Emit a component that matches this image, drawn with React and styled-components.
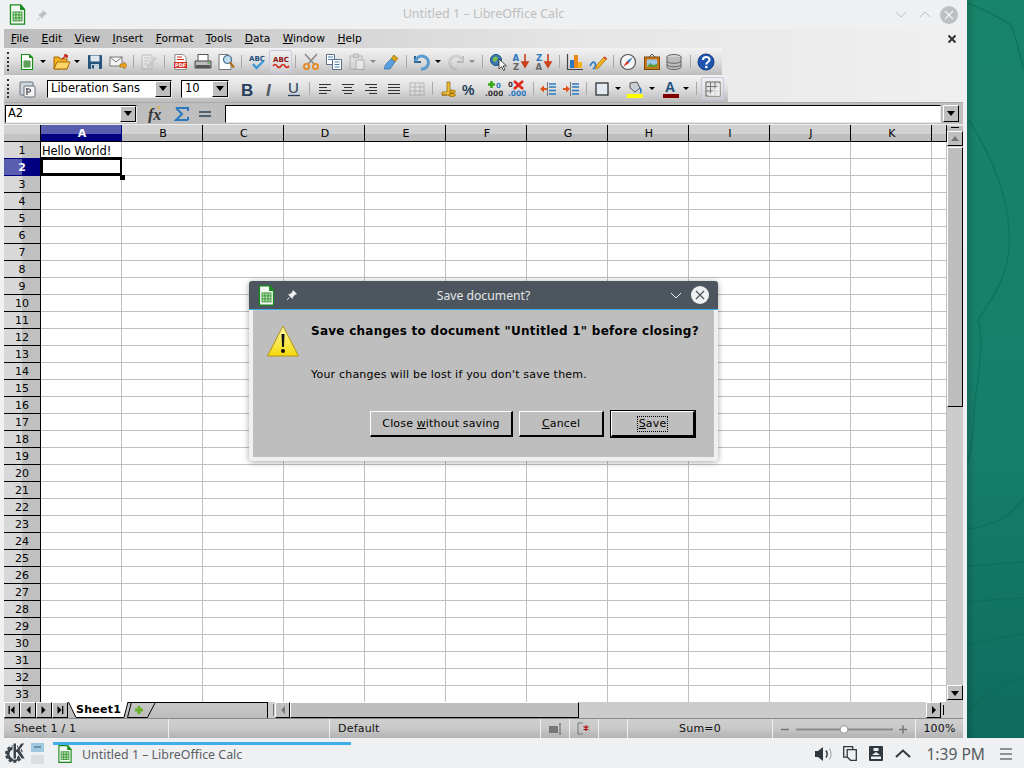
import React from 'react';
import styled, { createGlobalStyle } from 'styled-components';

const Global = createGlobalStyle`
  html, body { margin: 0; padding: 0; background: #eff0f1; }
  * { box-sizing: border-box; }
  body { font-family: "DejaVu Sans", sans-serif; }
`;

const Screen = styled.div`
  width: 1024px; height: 768px; overflow: hidden; display: flex; flex-direction: column;
  font-family: "DejaVu Sans", sans-serif; font-size: 11px; color: #000; position: relative;
`;
const Desktop = styled.div`display: flex; height: 738px;`;
const Wallpaper = styled.svg`flex: 1; height: 738px; display: block;`;
const AppWindow = styled.div`width: 967px; height: 738px; background: #eff0f1; display: flex; flex-direction: column;`;
const TitleBar = styled.div`height: 29px; display: flex; align-items: center; position: relative; padding-left: 6px; flex: none;`;
const TitleText = styled.div`
  position: absolute; left: 0; right: 0; top: 5px; text-align: center;
  font-family: "Noto Sans", sans-serif; font-size: 12.5px; color: #bcbfc2;
`;
const TitleTools = styled.div`display: flex; align-items: center; justify-content: space-between; width: 42px;`;
const TitleButtons = styled.div`margin-left: auto; display: flex; align-items: center; gap: 9px; padding-right: 9px;`;
const ChevGroup = styled.div`display: flex; align-items: center; gap: 12px;`;
const Frame = styled.div`flex: 1; min-height: 0; padding: 0 4px; display: flex; flex-direction: column;`;
const MenuBar = styled.div`
  height: 19px; flex: none; display: flex; align-items: center; position: relative; padding-left: 7px; gap: 12.5px;
  background: linear-gradient(to right, #bdbdbd, #e6e6e6 60%, #f0f0f0);
`;
const MenuItem = styled.span`font-size: 10.7px; u { text-decoration: underline; }`;
const MenuClose = styled.svg`position: absolute; right: 6px; top: 5px;`;
const ToolArea = styled.div`
  height: 54px; flex: none; display: flex; flex-direction: column;
  background: linear-gradient(to right, #bdbdbd, #e6e6e6 60%, #f0f0f0);
`;
const Toolbar = styled.div`
  height: 27px; width: ${p => p.$w}px; display: flex; align-items: center; flex: none; padding-left: 3px;
  background: linear-gradient(to bottom, #f2f2f2, #dedede 50%, #bcbcbc);
`;
const Grip = styled.div`width: 2px; height: 19px; border-left: 2px dotted #333; flex: none;`;
const Slot = styled.div`width: ${p => p.$w}px; flex: none; display: flex; align-items: center; height: 100%;`;
const SlotIcon = styled.svg`display: block; flex: none; margin-left: ${p => p.$ml || 0}px;`;
const Sep = styled.div`width: 1px; height: 13px; background: #a8a8a8; flex: none;`;
const Arrow = styled.div`
  width: 0; height: 0; border-left: 3px solid transparent; border-right: 3px solid transparent;
  border-top: 3px solid ${p => (p.$off ? '#8a8a8a' : '#000')}; flex: none;
`;
const Hover = styled.div`
  width: 23px; height: 23px; flex: none; border: 1px solid #c8c8e4; border-radius: 2px; margin-left: -2px;
  background: rgba(255,255,255,.15); display: flex; align-items: center; justify-content: center;
`;
const Combo = styled.div`
  height: 18px; width: ${p => p.$w}px; flex: none; display: flex; background: #fff; align-items: stretch;
  border-top: 1px solid #000; border-left: 1px solid #000; border-right: 1px solid #eee; border-bottom: 1px solid #eee;
  font-size: 11.5px;
`;
const ComboText = styled.div`flex: 1; padding-left: ${p => p.$pad || 3}px; line-height: 15px; overflow: hidden; white-space: nowrap;`;
const ComboBtn = styled.div`
  width: 16px; background: #bebebe; border-top: 1px solid #fff; border-left: 1px solid #fff;
  border-right: 1px solid #000; border-bottom: 1px solid #000; display: flex; align-items: center; justify-content: center;
`;
const DownTri = styled.div`width: 0; height: 0; border-left: 4px solid transparent; border-right: 4px solid transparent; border-top: 5px solid #000;`;
const FormulaBar = styled.div`
  height: 23px; flex: none; background: #bebebe; display: flex; align-items: center; padding-left: 1px;
  border-top: 1px solid #aaa; border-bottom: 1px solid #eee;
`;
const FxGroup = styled.div`display: flex; align-items: center; gap: 5px; margin-left: 11px; width: 77px;`;
const InputLine = styled.div`
  width: 716px; height: 18px; background: #fff; border-top: 1px solid #000; border-left: 1px solid #000;
  border-right: 1px solid #e6e6e6; border-bottom: 1px solid #e6e6e6; flex: none;
`;
const LineBtn = styled(ComboBtn)`width: 16px; height: 17px; margin-left: 2px; flex: none;`;
const SheetArea = styled.div`flex: 1; min-height: 0; display: flex;`;
const Sheet = styled.div`width: 943px; overflow: hidden; display: grid; grid-template-columns: 37px repeat(11, 81px) 15px; grid-auto-rows: 17px; background: #fff; align-content: start;`;
const Corner = styled.div`background: linear-gradient(to bottom, #d2d2d2 55%, #c4c4c4 55%); border-bottom: 1px solid #000; border-right: 1px solid #000;`;
const ColHead = styled.div`
  text-align: center; line-height: 15px; font-size: 11px; letter-spacing: .2px; padding: 1px 0 0 2px;
  border-right: 1px solid ${p => (p.$sel ? '#000080' : '#000')}; border-bottom: 1px solid #000;
  background: ${p => (p.$sel
    ? 'linear-gradient(to bottom, #5a5eb0 55%, #000080 55%)'
    : 'linear-gradient(to bottom, #d2d2d2 55%, #bebebe 55%)')};
  color: ${p => (p.$sel ? '#fff' : '#000')}; font-weight: ${p => (p.$sel ? 700 : 400)};
`;
const RowHead = styled.div`
  text-align: center; line-height: 17px; font-size: 11px; border-right: 1px solid #000;
  background: ${p => (p.$sel
    ? 'linear-gradient(to right, #5a5eb0 50%, #000080 50%)'
    : 'linear-gradient(to right, #d8d8d8 50%, #c0c0c0 50%)')};
  color: ${p => (p.$sel ? '#fff' : '#000')}; font-weight: ${p => (p.$sel ? 700 : 400)};
  border-bottom: 1px solid ${p => p.$line};
`;
const Cell = styled.div`
  border-right: 1px solid #c0c0c0; border-bottom: 1px solid #c0c0c0; font-size: 11.5px; line-height: 18px; padding-left: 1px;
  white-space: nowrap; position: relative; letter-spacing: -.1px;
`;
const Cursor = styled.div`
  position: absolute; z-index: 1; left: 0; top: -2px; right: -1px; bottom: -1px; border-style: solid; border-color: #000; border-width: 3px 2px;
  &::after { content: ''; position: absolute; right: -5px; bottom: -7px; width: 5px; height: 5px; background: #000; }
`;
const VScroll = styled.div`width: 16px; flex: none; background: #ccc; display: flex; flex-direction: column;`;
const VSplit = styled.div`height: 6px; background: #bebebe; border-top: 1px solid #ddd; display: flex; justify-content: center; padding-top: 1px;`;
const RaisedBtn = styled.div`
  background: #bebebe; border-top: 1px solid #fff; border-left: 1px solid #fff; border-right: 1px solid #000; border-bottom: 1px solid #000;
  display: flex; align-items: center; justify-content: center; flex: none;
  width: ${p => (p.$w ? `${p.$w}px` : 'auto')}; height: ${p => (p.$h ? `${p.$h}px` : 'auto')};
  margin-top: ${p => p.$mt || 0}px;
`;
const VSpace = styled.div`flex: 1;`;
const VFoot = styled.div`height: 2px; flex: none;`;
const TabBar = styled.div`height: 16px; flex: none; background: #ccc; display: flex; align-items: stretch;`;
const TabStrip = styled.div`
  width: 200px; flex: none; position: relative; background: linear-gradient(to bottom, #c8c8c8, #bcbcbc);
  border-right: 1px solid #000; border-top: 1px solid #000;
`;
const TabShape = styled.svg`position: absolute; left: 0; top: -1px; display: block;`;
const SheetTab = styled.div`
  position: absolute; left: 8px; top: -1px; width: 44px; height: 16px; font-weight: 700; font-size: 11px; letter-spacing: .25px; line-height: 15px; text-align: center;
`;
const HSplit = styled.div`
  width: 7px; flex: none; display: flex; justify-content: flex-end; padding: 2px 1px 2px 0;
`;
const SplitBar = styled.div`width: 1px; background: #777;`;
const HThumb = styled(RaisedBtn)`width: 289px; height: 16px;`;
const HEnd = styled.div`width: 22px; flex: none; padding: 3px 0 3px 2px; display: flex;`;
const EndBar = styled.div`width: 1px; background: #000;`;
const StatusBar = styled.div`
  height: 20px; flex: none; display: flex; align-items: center;
  background: linear-gradient(to bottom, #cfcfcf, #c8c8c8 50%, #b2b2b2); border-top: 1px solid #8a8a8a;
`;
const StatusCell = styled.div`
  width: ${p => p.$w}px; height: 19px; flex: none; display: flex; align-items: center; justify-content: ${p => p.$j || 'flex-start'};
  padding-left: ${p => p.$pad || 0}px; font-size: 11px; letter-spacing: .2px; color: #111;
  border-right: ${p => (p.$last ? 0 : '1px solid #eee')};
`;
const Panel = styled.div`height: 30px; flex: none; background: #eff0f1; display: flex; align-items: center; position: relative;`;
const Pager = styled.div`display: flex; flex-direction: column; gap: 3px; margin-left: 6px; width: 13px;`;
const PagerCell = styled.div`height: 9px; background: ${p => (p.$on ? '#9cc8e0' : '#dcdddf')}; display: flex; align-items: center; justify-content: center;`;
const PagerDash = styled.div`width: 7px; height: 2px; background: #6d8fa5;`;
const Task = styled.div`
  margin-left: 9px; width: 298px; height: 30px; position: relative; display: flex; align-items: center; padding: 2px 0 0 2px; gap: 7px;
  font-family: "Noto Sans", sans-serif; font-size: 12.4px; color: #5b6166;
  &::before { content: ''; position: absolute; left: 0; right: 0; top: 4px; height: 3px; background: #3daee9; }
`;
const Tray = styled.div`margin-left: auto; display: flex; align-items: center; padding: 1px 12px 0 0; color: #444c53;`;
const Clock = styled.div`font-family: "Noto Sans", sans-serif; font-size: 15.6px; color: #555c62; margin-left: 15px; padding-top: 1px; white-space: nowrap;`;
const Dialog = styled.div`
  position: absolute; left: 249px; top: 281px; width: 469px; height: 180px; background: #eff0f1; border-radius: 3px;
  box-shadow: 0 1px 6px rgba(0,0,0,.35); display: flex; flex-direction: column;
`;
const DialogTitle = styled.div`
  height: 29px; flex: none; background: #4d565e; border-bottom: 1px solid #3daee9; border-radius: 3px 3px 0 0;
  display: flex; align-items: center; position: relative; padding-left: 6px; gap: 8px;
`;
const DialogTitleText = styled.div`
  position: absolute; left: 0; right: 0; top: 6px; text-align: center; font-family: "Noto Sans", sans-serif; font-size: 12.2px; color: #e4e6e8;
`;
const DialogCtl = styled.div`margin-left: auto; display: flex; align-items: center; gap: 9px; padding-right: 9px;`;
const DialogBody = styled.div`
  flex: 1; margin: 0 4px 4px; background: #bebebe; display: flex; flex-direction: column; padding: 12px 19px 0 14px;
`;
const MsgRow = styled.div`display: flex; gap: 12px; height: 89px;`;
const MsgCol = styled.div`display: flex; flex-direction: column;`;
const WarnIcon = styled.svg`display: block; flex: none; margin-top: 3px;`;
const Heading = styled.div`font-weight: 700; font-size: 12px; letter-spacing: .26px; line-height: 16px; white-space: nowrap; margin-top: 1px;`;
const Sub = styled.div`font-size: 11px; letter-spacing: .2px; line-height: 14px; margin-top: 29px; white-space: nowrap;`;
const BtnRow = styled.div`display: flex; justify-content: flex-end; gap: 6px; align-items: center;`;
const DlgButton = styled.div`
  width: ${p => p.$w}px; height: 26px; background: #bebebe; display: flex; align-items: center; justify-content: center;
  border-top: 1px solid #fff; border-left: 1px solid #fff; border-right: 2px solid #000; border-bottom: 2px solid #000;
  outline: ${p => (p.$def ? '1px solid #000' : 'none')}; margin-left: ${p => (p.$def ? 1 : 0)}px;
  font-size: 11px; letter-spacing: .15px; u { text-decoration: underline; }
`;
const Focus = styled.span`border: 1px dotted #000; padding: 1px 1px; line-height: 12px; u { text-decoration: underline; }`;

const Cal = ({ size = 18 }) => (
  <SlotIcon width={size} height={size} viewBox="0 0 18 18">
    <path d="M3.500 1.500h8l3 3.500v11.500h-11z" fill="#f4f8f2" stroke="#168a1c" />
    <path d="M11 1l4 4.500h-4z" fill="#168a1c" />
    <rect x="5.500" y="7" width="7" height="7" fill="#bfe3b6" stroke="#2f8f2f" strokeWidth=".7" />
    <path d="M5.500 9.300h7M5.500 11.700h7M7.800 7v7M10.200 7v7" stroke="#2f8f2f" strokeWidth=".7" />
  </SlotIcon>
);

const glyphs = {
  new: <g><path d="M3.500 1.500h8l3 3v12h-11z" fill="#fff" stroke="#1a8f1a" strokeWidth="1.200" /><path d="M11 1l4 4h-4z" fill="#1a8f1a" /><path d="M6 8h6v6H6zM6 10h6M6 12h6M8 8v6M10 8v6" fill="#cfe9c5" stroke="#1a7a1a" strokeWidth=".8" /></g>,
  open: <g><path d="M1 4h5l1 2h7v10H1z" fill="#f5b324" stroke="#a86a00" /><path d="M1 16l3-7h13l-3 7z" fill="#fbd568" stroke="#a86a00" /><path d="M9 6l5-4m0 0h-3m3 0v3" stroke="#c8281e" strokeWidth="1.600" fill="none" /></g>,
  save: <g><rect x="2" y="2" width="14" height="14" rx="1" fill="#23527c" /><rect x="4.500" y="2.500" width="9" height="6" fill="#dfe7ee" /><rect x="5" y="11" width="8" height="5" fill="#c4d0da" /><rect x="6" y="12" width="2" height="3.500" fill="#23527c" /></g>,
  mail: <g><rect x="1" y="4" width="12" height="9" fill="#f3f3f3" stroke="#7a7a7a" /><path d="M1 4l6 5 6-5" fill="none" stroke="#7a7a7a" /><path d="M11 11h4V9l3 3.500L15 16v-2h-4z" fill="#f5a623" stroke="#a86a00" strokeWidth=".7" /></g>,
  edit: <g opacity=".4"><path d="M3 2h10v14H3z" fill="#eee" stroke="#888" /><path d="M5 5h6M5 8h6M5 11h3" stroke="#999" /><path d="M8 13l8-9 1.500 1.500-8 9z" fill="#bbb" stroke="#888" strokeWidth=".6" /></g>,
  pdf: <g><path d="M3 1.500h8l3 3v12H3z" fill="#fff" stroke="#888" /><rect x="2" y="9" width="13" height="6" fill="#d5281e" /><text x="3" y="14" fontSize="5" fontWeight="700" fill="#fff" fontFamily="DejaVu Sans">PDF</text><path d="M5 4h5M5 6.500h7" stroke="#d5281e" strokeWidth="1.200" /></g>,
  print: <g><rect x="4" y="1.500" width="10" height="7" fill="#fff" stroke="#555" /><path d="M1 8h16v7H1z" fill="#bcbcbc" stroke="#444" /><rect x="2" y="12" width="14" height="3" fill="#555" /><circle cx="14.500" cy="10" r="1" fill="#4caf50" /></g>,
  preview: <g><path d="M2 1.500h9l3 3v12H2z" fill="#fff" stroke="#777" /><circle cx="10.500" cy="6.500" r="4" fill="#bcdcf0" stroke="#4a6f8a" strokeWidth="1.200" /><path d="M13 9.500l4 5" stroke="#b06a1c" strokeWidth="2.200" /></g>,
  spell: <g><text x="1" y="7.500" fontSize="7" fontWeight="700" fill="#1f4f80" fontFamily="DejaVu Sans">ABC</text><path d="M5 11l3.500 4 7-7" fill="none" stroke="#3a97d8" strokeWidth="2.300" /></g>,
  auto: <g><text x="1" y="9" fontSize="7" fontWeight="700" fill="#8a1010" fontFamily="DejaVu Sans">ABC</text><path d="M1 13q2-3 4 0t4 0 4 0 4 0" fill="none" stroke="#d62a1c" strokeWidth="1.700" /></g>,
  cut: <g><path d="M3 1l9 10M15 1L6 11" stroke="#8a8a8a" strokeWidth="1.600" /><circle cx="4.500" cy="13.500" r="2.600" fill="none" stroke="#e8871a" strokeWidth="1.800" /><circle cx="13.500" cy="13.500" r="2.600" fill="none" stroke="#e8871a" strokeWidth="1.800" /></g>,
  copy: <g><path d="M1.500 1.500h8v10h-8z" fill="#fff" stroke="#58708a" /><path d="M3 4h5M3 6.500h5" stroke="#4a7fb0" /><path d="M7.500 6.500h9v10h-9z" fill="#fff" stroke="#58708a" /><path d="M9.500 9h5M9.500 11.500h5M9.500 14h5" stroke="#4a7fb0" /></g>,
  paste: <g opacity=".42"><rect x="2" y="3" width="12" height="13" fill="#ddd" stroke="#777" /><rect x="5.500" y="1" width="5" height="3.500" fill="#bbb" stroke="#777" /><path d="M8 7h8v9.500H8z" fill="#fff" stroke="#777" /></g>,
  brush: <g><path d="M12 2l4 3.500-3 3.500-4-3.500z" fill="#d8a31c" stroke="#8a6500" strokeWidth=".6" /><path d="M9 6l4 3-5 7H2l2-5z" fill="#5aa0e0" stroke="#2a6aa8" strokeWidth=".7" /></g>,
  undo: <g><path d="M3 3v6h6" fill="none" stroke="#2a5f8e" strokeWidth="2" /><path d="M3.500 8.500A6.500 6.500 0 1 1 9 16" fill="none" stroke="#5a9bd0" strokeWidth="3" /></g>,
  redo: <g opacity=".38"><path d="M15 3v6H9" fill="none" stroke="#777" strokeWidth="2" /><path d="M14.500 8.500A6.500 6.500 0 1 0 9 16" fill="none" stroke="#aaa" strokeWidth="3" /></g>,
  find: <g><circle cx="7" cy="7" r="5.500" fill="#3b7ab5" stroke="#1c4f80" /><path d="M4 5q3-3 5 0l-2 4-3-1z" fill="#7ac043" /><path d="M10 6v10l2.500-2.500 2 4 1.500-.8-2-3.800h3.500z" fill="#fff" stroke="#222" strokeWidth=".8" /></g>,
  sortA: <g><text x="0.500" y="7.500" fontSize="8.500" fontWeight="700" fill="#2a78c0" fontFamily="DejaVu Sans">A</text><text x="1" y="17" fontSize="8.500" fontWeight="700" fill="#666" fontFamily="DejaVu Sans">Z</text><path d="M13 1v11m-3-3l3 5 3-5z" fill="#e04a1c" stroke="#c8401a" strokeWidth="1.600" /></g>,
  sortZ: <g><text x="1" y="7.500" fontSize="8.500" fontWeight="700" fill="#2a78c0" fontFamily="DejaVu Sans">Z</text><text x="0.500" y="17" fontSize="8.500" fontWeight="700" fill="#666" fontFamily="DejaVu Sans">A</text><path d="M13 1v11m-3-3l3 5 3-5z" fill="#e04a1c" stroke="#c8401a" strokeWidth="1.600" /></g>,
  chart: <g><path d="M1.500 1v15.500H17" fill="none" stroke="#444" strokeWidth="1.200" /><rect x="4" y="7" width="4" height="8" fill="#2a78c0" /><rect x="8" y="2" width="4" height="13" fill="#e8871a" /><rect x="12" y="9" width="4" height="6" fill="#f2b21e" /></g>,
  draw: <g><path d="M1 13q3-6 5-3t-2 6" fill="none" stroke="#2a78c0" strokeWidth="1.600" /><path d="M7 13l8-9 2.500 2-8 9-3 1z" fill="#f2b21e" stroke="#a86a00" strokeWidth=".7" /><path d="M15 4l2.500 2" stroke="#d5281e" strokeWidth="1.600" /></g>,
  nav: <g><circle cx="9" cy="9" r="7.500" fill="#f5f5f5" stroke="#555" strokeWidth="1.200" /><path d="M14 4L8 8l2 2z" fill="#2a78c0" /><path d="M4 14l4-6 2 2z" fill="#d5281e" /></g>,
  gallery: <g><rect x="1.500" y="4" width="15" height="12.500" fill="#c8781a" stroke="#7a4a08" /><rect x="4" y="6.500" width="10" height="7.500" fill="#9cc8e8" /><path d="M4 14l3-4 3 2 4-1v3z" fill="#5a9e3a" /><path d="M6 4l3-3 3 3" fill="none" stroke="#555" /></g>,
  db: <g><ellipse cx="9" cy="4" rx="7" ry="2.500" fill="#d4d4d4" stroke="#666" /><path d="M2 4v10c0 3.300 14 3.300 14 0V4" fill="#bdbdbd" stroke="#666" /><path d="M2 8c0 3 14 3 14 0M2 11.500c0 3 14 3 14 0" fill="none" stroke="#666" /></g>,
  help: <g><circle cx="9" cy="9" r="8" fill="#1f55b0" stroke="#123a80" /><path d="M6 7c0-4 6.500-4 6.500-.3 0 2.300-3.200 2.300-3.200 4.800" fill="none" stroke="#fff" strokeWidth="2.100" /><circle cx="9.300" cy="14" r="1.300" fill="#fff" /></g>,
  styles: <g><rect x="2" y="2" width="13" height="13" rx="1" fill="#cfd6dc" stroke="#67727c" /><rect x="6" y="6" width="11" height="11" rx="1" fill="#f3f3f3" stroke="#67727c" /><path d="M9 8v7M8 9h3q1.500 0 1.500 1.400T11 12H9" fill="none" stroke="#445" strokeWidth="1.200" /></g>,
  bold: <text x="2" y="15.500" fontSize="17" fontWeight="700" fill="#23405c" fontFamily="Liberation Sans">B</text>,
  italic: <text x="4" y="15.500" fontSize="17" fontStyle="italic" fontWeight="700" fill="#4f5a64" fontFamily="Liberation Sans">I</text>,
  under: <g><text x="3" y="13" fontSize="15" fill="#23405c" fontFamily="Liberation Sans">U</text><path d="M3 15.500h12" stroke="#23405c" strokeWidth="1.300" /></g>,
  left: <path d="M3 4.500h12M3 7.500h8M3 10.500h12M3 13.500h8" stroke="#333" fill="none" />,
  center: <path d="M3 4.500h12M5 7.500h8M3 10.500h12M5 13.500h8" stroke="#333" fill="none" />,
  right: <path d="M3 4.500h12M7 7.500h8M3 10.500h12M7 13.500h8" stroke="#333" fill="none" />,
  just: <path d="M3 4.500h12M3 7.500h12M3 10.500h12M3 13.500h12" stroke="#333" fill="none" />,
  merge: <g opacity=".4"><rect x="2" y="3" width="14" height="12" fill="#e8e8e8" stroke="#777" /><path d="M2 7h14M2 11h14M7 3v12M12 3v12" stroke="#777" /></g>,
  coins: <g><ellipse cx="13" cy="15" rx="3.500" ry="1.500" fill="#e8a81c" stroke="#8a6000" strokeWidth=".7" /><ellipse cx="13" cy="11.500" rx="3.500" ry="1.500" fill="#e8a81c" stroke="#8a6000" strokeWidth=".7" /><path d="M8 2h3v13H3v-3h5z" fill="#f0bf3c" stroke="#8a6000" strokeWidth=".7" /><path d="M3 15h5" stroke="#8a6000" /></g>,
  percent: <text x="1" y="14.500" fontSize="14" fontWeight="700" fill="#23405c" fontFamily="Liberation Sans">%</text>,
  decAdd: <g><path d="M6.500 1v7M3 4.500h7" stroke="#38a81a" strokeWidth="2.600" /><text x="11" y="8" fontSize="7" fontWeight="700" fill="#2a78c0" fontFamily="DejaVu Sans">0</text><text x="0" y="16" fontSize="7.500" fontWeight="700" fill="#333" fontFamily="DejaVu Sans">.000</text></g>,
  decDel: <g><text x="0" y="7" fontSize="7" fontWeight="700" fill="#333" fontFamily="DejaVu Sans">0</text><path d="M6 1l9 8M15 1L6 9" stroke="#e0281e" strokeWidth="2.600" /><text x="0" y="16" fontSize="7.500" fontWeight="700" fill="#2a78c0" fontFamily="DejaVu Sans">.000</text></g>,
  indL: <g><path d="M1 9l4-3.500V8h3v2H5v2.500z" fill="#e0551c" /><path d="M10 4h7M10 7h7M10 10.500h7M10 14h7" stroke="#2a78c0" strokeWidth="1.500" /><path d="M8.500 2v14" stroke="#777" /></g>,
  indR: <g><path d="M8 9L4 5.500V8H1v2h3v2.500z" fill="#e0551c" /><path d="M10 4h7M10 7h7M10 10.500h7M10 14h7" stroke="#2a78c0" strokeWidth="1.500" /><path d="M8.500 2v14" stroke="#777" /></g>,
  border: <rect x="3" y="3" width="12" height="12" fill="#e4eaf2" stroke="#222" strokeWidth="1.200" />,
  fill: <g><path d="M4 3l7-1 3 6-5 4-5-4z" fill="#c8d0d6" stroke="#555" /><path d="M14 8q2 3 0 5" stroke="#2a78c0" strokeWidth="1.600" fill="none" /><rect x="1" y="14" width="16" height="4" fill="#ffff00" /></g>,
  color: <g><text x="3" y="12" fontSize="14" fontWeight="700" fill="#1f4f80" fontFamily="Liberation Sans">A</text><rect x="1" y="14" width="16" height="4" fill="#800000" /></g>,
  gridt: <g><rect x="2" y="2" width="14" height="14" fill="#e4e4e4" stroke="#666" /><path d="M2 6.500h14M2 11h14M6.500 2v14M11 2v14" stroke="#777" /><path d="M16 3v13H4z" fill="#f2f2f2" opacity=".75" /></g>,
};

const t1 = [
  ['new', 27], ['a', 43], ['open', 62], ['a', 77], ['save', 95], ['mail', 118], ['s', 133], ['edit', 148], ['s', 164],
  ['pdf', 181], ['print', 203], ['preview', 226], ['s', 241], ['spell', 257], ['hauto', 280], ['s', 295],
  ['cut', 311], ['copy', 334], ['paste', 357], ['ao', 373], ['brush', 391], ['s', 406], ['undo', 421], ['a', 438],
  ['redo', 457], ['ao', 472], ['s', 482], ['find', 498], ['sortA', 521], ['sortZ', 544], ['s', 559], ['chart', 575],
  ['draw', 598], ['s', 613], ['nav', 628], ['gallery', 652], ['db', 674], ['s', 690], ['help', 706],
];
const t2b = [
  ['bold', 248], ['italic', 271], ['under', 294], ['s', 309], ['left', 325], ['center', 348], ['right', 371], ['just', 394],
  ['merge', 417], ['s', 432], ['coins', 448], ['percent', 470], ['decAdd', 494], ['decDel', 517], ['s', 533],
  ['indL', 548], ['indR', 571], ['s', 586], ['border', 602], ['a', 618], ['fill', 635], ['a', 652], ['color', 671], ['a', 686],
  ['s', 696], ['hgridt', 712],
];

const leftEdge = (k, c) => (k === 's' ? c : k === 'a' || k === 'ao' ? c - 3 : c - 9);

const Icon = ({ name, size = 18 }) => (
  <SlotIcon width={size} height={size} viewBox="0 0 18 18">{glyphs[name]}</SlotIcon>
);

const ToolRow = ({ items, origin }) => (
  <>
    {items.map(([k, c], i) => {
      const left = leftEdge(k, c);
      const next = items[i + 1] ? leftEdge(items[i + 1][0], items[i + 1][1]) : left + 20;
      return (
        <React.Fragment key={i}>
          {i === 0 && <Slot $w={left - origin} />}
          <Slot $w={next - left}>
            {k === 's' ? <Sep /> : k === 'a' ? <Arrow /> : k === 'ao' ? <Arrow $off /> : k[0] === 'h' && glyphs[k.slice(1)] ? <Hover><Icon name={k.slice(1)} /></Hover> : <Icon name={k} />}
          </Slot>
        </React.Fragment>
      );
    })}
  </>
);

const Mb = ({ l, r }) => <MenuItem><u>{l}</u>{r}</MenuItem>;
const cols = ['B', 'C', 'D', 'E', 'F', 'G', 'H', 'I', 'J', 'K'];
const rows = Array.from({ length: 33 }, (_, i) => i + 1);

const CloseCircle = ({ bg, fg }) => (
  <SlotIcon width="18" height="18" viewBox="0 0 18 18">
    <circle cx="9" cy="9" r="9" fill={bg} />
    <path d="M5 5l8 8M13 5l-8 8" stroke={fg} strokeWidth="1.200" />
  </SlotIcon>
);
const Chev = ({ up, color, w = 12, sw = 1 }) => (
  <SlotIcon width={w} height="7" viewBox="0 0 12 7" preserveAspectRatio="none">
    <path d={up ? 'M1 6l5-5 5 5' : 'M1 1l5 5 5-5'} fill="none" stroke={color} strokeWidth={sw} />
  </SlotIcon>
);
const Pin = ({ color }) => (
  <SlotIcon width="12" height="12" viewBox="0 0 12 12">
    <path d="M7 1l4 4-2 .8-2 2.200L6.500 10 2 5.500 4 5l2.200-2z" fill={color} />
    <path d="M3.500 8.500L1 11" stroke={color} strokeWidth="1" />
  </SlotIcon>
);
const Tri = ({ dir, color = '#000' }) => {
  const d = { l: 'M7 1v8L3 5z', r: 'M3 1v8l4-4z', u: 'M5 2l4 5H1z', d: 'M1 3h8L5 8z' }[dir];
  return <SlotIcon width="10" height="10" viewBox="0 0 10 10"><path d={d} fill={color} /></SlotIcon>;
};
const NavBtn = ({ dir, bar, w }) => (
  <RaisedBtn $w={w} $h={16}>
    <SlotIcon width="10" height="10" viewBox="0 0 10 10">
      {dir === 'l' ? <path d="M7.500 1v8L3.500 5z" fill="#000" /> : <path d="M2.500 1v8l4-4z" fill="#000" />}
      {bar && <rect x={dir === 'l' ? 1.5 : 7} y="1" width="1.300" height="8" fill="#000" />}
    </SlotIcon>
  </RaisedBtn>
);

const App = () => (
  <Screen>
    <Global />
    <Desktop>
      <AppWindow>
        <TitleBar>
          <TitleTools>
            <Cal size={23} />
            <Pin color="#bcc0c4" />
          </TitleTools>
          <TitleText>Untitled 1 – LibreOffice Calc</TitleText>
          <TitleButtons>
            <ChevGroup>
              <Chev color="#bcc0c4" />
              <Chev up color="#bcc0c4" />
            </ChevGroup>
            <CloseCircle bg="#bcc0c4" fg="#f2f3f4" />
          </TitleButtons>
        </TitleBar>
        <Frame>
          <MenuBar>
            <Mb l="F" r="ile" /><Mb l="E" r="dit" /><Mb l="V" r="iew" /><Mb l="I" r="nsert" /><Mb l="F" r="ormat" />
            <Mb l="T" r="ools" /><Mb l="D" r="ata" /><Mb l="W" r="indow" /><Mb l="H" r="elp" />
            <MenuClose width="10" height="10" viewBox="0 0 10 10"><path d="M1.500 1.500l7 7M8.500 1.500l-7 7" stroke="#333" strokeWidth="2" /></MenuClose>
          </MenuBar>
          <ToolArea>
            <Toolbar $w={718}>
              <Grip />
              <ToolRow items={t1} origin={9} />
            </Toolbar>
            <Toolbar $w={724}>
              <Grip />
              <ToolRow items={[['styles', 27]]} origin={9} />
              <Slot $w={9} />
              <Combo $w={125}><ComboText>Liberation Sans</ComboText><ComboBtn><DownTri /></ComboBtn></Combo>
              <Slot $w={9} />
              <Combo $w={48}><ComboText $pad={3}>10</ComboText><ComboBtn><DownTri /></ComboBtn></Combo>
              <ToolRow items={t2b} origin={229} />
            </Toolbar>
          </ToolArea>
          <FormulaBar>
            <Combo $w={132}><ComboText $pad={2}>A2</ComboText><ComboBtn><DownTri /></ComboBtn></Combo>
            <FxGroup>
              <SlotIcon width="20" height="18" viewBox="0 0 20 18">
                <text x="0" y="15" fontSize="16" fontStyle="italic" fontWeight="700" fill="#333" fontFamily="Liberation Serif">fx</text>
                <path d="M3 3h1M10 1l1 3M15 2h1" stroke="#e8b31c" strokeWidth="1.400" />
              </SlotIcon>
              <SlotIcon width="18" height="18" viewBox="0 0 18 18"><path d="M3 3h12v3M15 15H3l6-6-6-6M15 15v-3" fill="none" stroke="#2a78c0" strokeWidth="2" /></SlotIcon>
              <SlotIcon width="18" height="18" viewBox="0 0 18 18"><path d="M3 7h12M3 11h12" stroke="#506070" strokeWidth="2" /></SlotIcon>
            </FxGroup>
            <InputLine />
            <LineBtn><DownTri /></LineBtn>
          </FormulaBar>
          <SheetArea>
            <Sheet>
              <Corner />
              <ColHead $sel>A</ColHead>
              {cols.map(c => <ColHead key={c}>{c}</ColHead>)}
              <ColHead />
              {rows.map(r => (
                <React.Fragment key={r}>
                  <RowHead $sel={r === 2} $line={r <= 2 ? '#000080' : '#000'}>{r}</RowHead>
                  <Cell>
                    {r === 1 && 'Hello World!'}
                    {r === 2 && <Cursor />}
                  </Cell>
                  {cols.map(c => <Cell key={c} />)}
                  <Cell />
                </React.Fragment>
              ))}
            </Sheet>
            <VScroll>
              <VSplit><SlotIcon width="8" height="2"><rect width="8" height="1" fill="#000" /></SlotIcon></VSplit>
              <RaisedBtn $h={15}><Tri dir="u" color="#777" /></RaisedBtn>
              <RaisedBtn $h={260} $mt={1} />
              <VSpace />
              <RaisedBtn $h={15}><Tri dir="d" /></RaisedBtn>
              <VFoot />
            </VScroll>
          </SheetArea>
          <TabBar>
            <NavBtn dir="l" bar w={16} /><NavBtn dir="l" w={16} /><NavBtn dir="r" w={16} /><NavBtn dir="r" bar w={16} />
            <TabStrip>
              <TabShape width="90" height="16" viewBox="0 0 90 16">
                <path d="M0 0h60l-4 15H8z" fill="#fff" />
                <path d="M.5 0L8 15.500h48L60 0M63.500 0L59.500 15.500h20L87.500 0" fill="none" stroke="#000" />
                <path d="M71 4v8M67 8h8" stroke="#6ab02a" strokeWidth="3" />
              </TabShape>
              <SheetTab>Sheet1</SheetTab>
            </TabStrip>
            <HSplit><SplitBar /></HSplit>
            <RaisedBtn $w={15} $h={16}><Tri dir="l" color="#777" /></RaisedBtn>
            <HThumb />
            <VSpace />
            <RaisedBtn $w={15} $h={16}><Tri dir="r" /></RaisedBtn>
            <HEnd><EndBar /></HEnd>
          </TabBar>
          <StatusBar>
            <StatusCell $w={165} $pad={10}>Sheet 1 / 1</StatusCell>
            <StatusCell $w={161} />
            <StatusCell $w={211} $pad={8}>Default</StatusCell>
            <StatusCell $w={29} $j="center">
              <SlotIcon width="14" height="12" viewBox="0 0 14 12"><rect x="1" y="3" width="9" height="7" fill="#777" /><path d="M11 1h2M12 1v10M11 11h2" stroke="#666" /></SlotIcon>
            </StatusCell>
            <StatusCell $w={29} $j="center">
              <SlotIcon width="14" height="13" viewBox="0 0 14 13"><path d="M6 1H1v11h5" fill="none" stroke="#777" /><path d="M9 3v6M6.500 4.500l5 3M11.500 4.500l-5 3" stroke="#b01818" strokeWidth="1.200" /></SlotIcon>
            </StatusCell>
            <StatusCell $w={29} />
            <StatusCell $w={145} $j="center">Sum=0</StatusCell>
            <StatusCell $w={143} $j="center">
              <SlotIcon width="128" height="12" viewBox="0 0 128 12">
                <path d="M1 6.500h8M119 6.500h8M123 2.500v8" stroke="#777" strokeWidth="1.500" />
                <path d="M16 6.500h97" stroke="#8c8c8c" strokeWidth="1.800" />
                <circle cx="64" cy="6.500" r="3.800" fill="#fff" stroke="#999" />
              </SlotIcon>
            </StatusCell>
            <StatusCell $w={47} $last $j="center">100%</StatusCell>
          </StatusBar>
        </Frame>
      </AppWindow>
      <Wallpaper viewBox="0 0 57 738" preserveAspectRatio="none">
        <defs>
          <linearGradient id="wp" x1="0" y1="0" x2="0" y2="1">
            <stop offset="0" stopColor="#188469" />
            <stop offset=".6" stopColor="#167f6a" />
            <stop offset="1" stopColor="#0f6b5e" />
          </linearGradient>
          <linearGradient id="wpEdge" x1="0" y1="0" x2="1" y2="0">
            <stop offset="0" stopColor="#000" stopOpacity=".14" />
            <stop offset="1" stopColor="#000" stopOpacity="0" />
          </linearGradient>
        </defs>
        <rect width="57" height="738" fill="url(#wp)" />
        <g fill="none" stroke="#0d6a56" strokeWidth="1.500" opacity=".55">
          <path d="M0 3C20 10 35 20 41 23S50 45 57 70" />
          <path d="M2 120C30 165 45 210 42 250C38 285 20 305 11 320C16 335 14 360 8 400C6 430 6 445 0 465" />
          <path d="M0 529C25 527 45 515 57 498" />
          <path d="M0 566C20 565 40 563 57 562" />
          <path d="M0 602C20 600 40 599 57 598" />
          <path d="M0 646C20 640 40 636 57 634" />
          <path d="M0 714C12 695 35 683 57 678" />
        </g>
        <rect width="8" height="738" fill="url(#wpEdge)" />
      </Wallpaper>
    </Desktop>
    <Panel>
      <SlotIcon width="20" height="20" viewBox="0 0 20 20" $ml={5}>
        <circle cx="9" cy="11" r="6" fill="none" stroke="#3c444b" strokeWidth="3" />
        <circle cx="9" cy="11" r="8" fill="none" stroke="#3c444b" strokeWidth="2" strokeDasharray="3 2.030" />
        <path d="M8 0h3.500v6.500L16 0h4l-5 7 5.500 9h-4L11.500 9v7H8z" fill="#3c444b" stroke="#eff0f1" strokeWidth="1" />
      </SlotIcon>
      <Pager><PagerCell $on><PagerDash /></PagerCell><PagerCell /></Pager>
      <Task><Cal size={20} />Untitled 1 – LibreOffice Calc</Task>
      <Tray>
        <SlotIcon width="20" height="16" viewBox="0 0 20 16"><path d="M1 5h3l5-4v14l-5-4H1z" fill="#30383f" /><path d="M12 4.500q2.300 3.500 0 7" stroke="#30383f" strokeWidth="1.500" fill="none" /><path d="M15.500 2.500q3.200 5.500 0 11" stroke="#9aa0a5" fill="none" /></SlotIcon>
        <SlotIcon width="14" height="15" viewBox="0 0 14 15" $ml={9}><path d="M.7.700h9v10.500h-9z" fill="none" stroke="#30383f" strokeWidth="1.300" /><path d="M4.200 3.700h9.100v10.600H7.500l-3.300-3.300z" fill="#eff0f1" stroke="#30383f" strokeWidth="1.300" /></SlotIcon>
        <SlotIcon width="14" height="15" viewBox="0 0 14 15" $ml={12}><rect width="14" height="15" rx="1" fill="#30383f" /><path d="M4.500 2h5v3h-5zM3 9l4-3 4 3zM2 10.500h10V13H2z" fill="#eff0f1" /></SlotIcon>
        <SlotIcon width="16" height="9" viewBox="0 0 16 9" $ml={12}><path d="M1 8l7-6.500L15 8" fill="none" stroke="#30383f" strokeWidth="2" /></SlotIcon>
        <Clock>1:39 PM</Clock>
        <SlotIcon width="12" height="14" viewBox="0 0 12 14" $ml={15}><path d="M0 2h12M0 7h12M0 12h12" stroke="#6c7277" strokeWidth="1.400" /></SlotIcon>
      </Tray>
    </Panel>
    <Dialog>
      <DialogTitle>
        <Cal size={23} />
        <Pin color="#f0f1f2" />
        <DialogTitleText>Save document?</DialogTitleText>
        <DialogCtl>
          <Chev color="#eff0f1" />
          <CloseCircle bg="#eff0f1" fg="#4d565e" />
        </DialogCtl>
      </DialogTitle>
      <DialogBody>
        <MsgRow>
          <WarnIcon width="32" height="32" viewBox="0 0 32 32">
            <defs><linearGradient id="warn" x1="0" y1="0" x2="0" y2="1"><stop offset="0" stopColor="#fff9a8" /><stop offset="1" stopColor="#f5d90a" /></linearGradient></defs>
            <path d="M16 1L31.500 31H.5z" fill="url(#warn)" stroke="#b09410" strokeLinejoin="round" />
            <path d="M14.500 9h3l-.6 13h-1.800z" fill="#111" />
            <circle cx="16" cy="26" r="2" fill="#111" />
          </WarnIcon>
          <MsgCol>
            <Heading>Save changes to document "Untitled 1" before closing?</Heading>
            <Sub>Your changes will be lost if you don't save them.</Sub>
          </MsgCol>
        </MsgRow>
        <BtnRow>
          <DlgButton $w={143}><span>Close <u>w</u>ithout saving</span></DlgButton>
          <DlgButton $w={85}><span><u>C</u>ancel</span></DlgButton>
          <DlgButton $w={84} $def><Focus><u>S</u>ave</Focus></DlgButton>
        </BtnRow>
      </DialogBody>
    </Dialog>
  </Screen>
);

export default App;
